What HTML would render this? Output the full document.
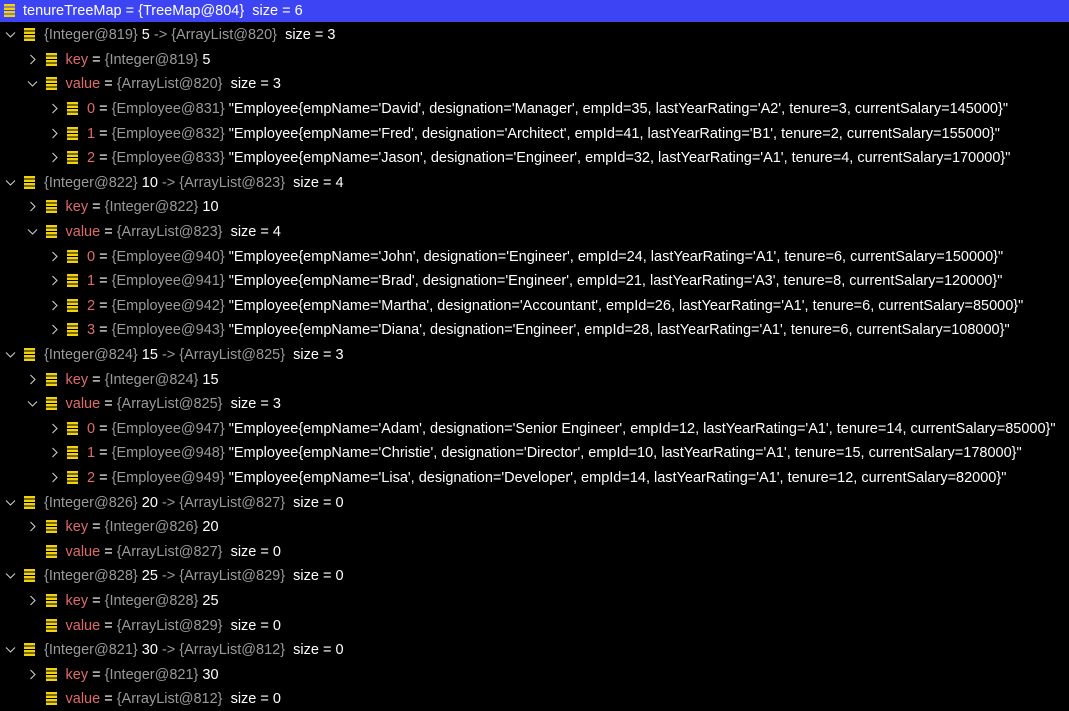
<!DOCTYPE html>
<html><head><meta charset="utf-8"><style>
body{margin:0;width:1069px;height:711px;background:#000;overflow:hidden;font-family:"Liberation Sans",sans-serif;font-size:14.5px;color:#fff}
.r{position:absolute;left:0;width:1069px;height:24px;line-height:24px;white-space:nowrap}
.hd{background:#3d44f4;height:22px;line-height:22px;top:0}
.ic{position:absolute;top:5px;width:11px;height:13px;background:repeating-linear-gradient(#f2d20a 0 2.6px,transparent 2.6px 3.5px)}
.hd .ic{top:4px;left:4px}
.ar{position:absolute;top:0}
.t{position:absolute;top:0}
.g{color:#9a9a9a}.k{color:#e06a6a}
</style></head><body>
<div class="r hd"><span class="ic"></span><span class="t" style="left:23px">tenureTreeMap = {TreeMap@804}&nbsp; size = 6</span></div>
<div id="rows"></div>
<script>
const rows=[
[1,'v','<span class="g">{Integer@819}</span> 5 <span class="g">-&gt; {ArrayList@820}</span>&nbsp; size = 3'],
[2,'>','<span class="k">key</span> = <span class="g">{Integer@819}</span> 5'],
[2,'v','<span class="k">value</span> = <span class="g">{ArrayList@820}</span>&nbsp; size = 3'],
[3,'>','<span class="k">0</span> = <span class="g">{Employee@831}</span> "Employee{empName=\'David\', designation=\'Manager\', empId=35, lastYearRating=\'A2\', tenure=3, currentSalary=145000}"'],
[3,'>','<span class="k">1</span> = <span class="g">{Employee@832}</span> "Employee{empName=\'Fred\', designation=\'Architect\', empId=41, lastYearRating=\'B1\', tenure=2, currentSalary=155000}"'],
[3,'>','<span class="k">2</span> = <span class="g">{Employee@833}</span> "Employee{empName=\'Jason\', designation=\'Engineer\', empId=32, lastYearRating=\'A1\', tenure=4, currentSalary=170000}"'],
[1,'v','<span class="g">{Integer@822}</span> 10 <span class="g">-&gt; {ArrayList@823}</span>&nbsp; size = 4'],
[2,'>','<span class="k">key</span> = <span class="g">{Integer@822}</span> 10'],
[2,'v','<span class="k">value</span> = <span class="g">{ArrayList@823}</span>&nbsp; size = 4'],
[3,'>','<span class="k">0</span> = <span class="g">{Employee@940}</span> "Employee{empName=\'John\', designation=\'Engineer\', empId=24, lastYearRating=\'A1\', tenure=6, currentSalary=150000}"'],
[3,'>','<span class="k">1</span> = <span class="g">{Employee@941}</span> "Employee{empName=\'Brad\', designation=\'Engineer\', empId=21, lastYearRating=\'A3\', tenure=8, currentSalary=120000}"'],
[3,'>','<span class="k">2</span> = <span class="g">{Employee@942}</span> "Employee{empName=\'Martha\', designation=\'Accountant\', empId=26, lastYearRating=\'A1\', tenure=6, currentSalary=85000}"'],
[3,'>','<span class="k">3</span> = <span class="g">{Employee@943}</span> "Employee{empName=\'Diana\', designation=\'Engineer\', empId=28, lastYearRating=\'A1\', tenure=6, currentSalary=108000}"'],
[1,'v','<span class="g">{Integer@824}</span> 15 <span class="g">-&gt; {ArrayList@825}</span>&nbsp; size = 3'],
[2,'>','<span class="k">key</span> = <span class="g">{Integer@824}</span> 15'],
[2,'v','<span class="k">value</span> = <span class="g">{ArrayList@825}</span>&nbsp; size = 3'],
[3,'>','<span class="k">0</span> = <span class="g">{Employee@947}</span> "Employee{empName=\'Adam\', designation=\'Senior Engineer\', empId=12, lastYearRating=\'A1\', tenure=14, currentSalary=85000}"'],
[3,'>','<span class="k">1</span> = <span class="g">{Employee@948}</span> "Employee{empName=\'Christie\', designation=\'Director\', empId=10, lastYearRating=\'A1\', tenure=15, currentSalary=178000}"'],
[3,'>','<span class="k">2</span> = <span class="g">{Employee@949}</span> "Employee{empName=\'Lisa\', designation=\'Developer\', empId=14, lastYearRating=\'A1\', tenure=12, currentSalary=82000}"'],
[1,'v','<span class="g">{Integer@826}</span> 20 <span class="g">-&gt; {ArrayList@827}</span>&nbsp; size = 0'],
[2,'>','<span class="k">key</span> = <span class="g">{Integer@826}</span> 20'],
[2,'','<span class="k">value</span> = <span class="g">{ArrayList@827}</span>&nbsp; size = 0'],
[1,'v','<span class="g">{Integer@828}</span> 25 <span class="g">-&gt; {ArrayList@829}</span>&nbsp; size = 0'],
[2,'>','<span class="k">key</span> = <span class="g">{Integer@828}</span> 25'],
[2,'','<span class="k">value</span> = <span class="g">{ArrayList@829}</span>&nbsp; size = 0'],
[1,'v','<span class="g">{Integer@821}</span> 30 <span class="g">-&gt; {ArrayList@812}</span>&nbsp; size = 0'],
[2,'>','<span class="k">key</span> = <span class="g">{Integer@821}</span> 30'],
[2,'','<span class="k">value</span> = <span class="g">{ArrayList@812}</span>&nbsp; size = 0']
];
let h='';
rows.forEach((r,i)=>{
 const top=(i+1)*24.6-1.5, lv=r[0];
 const ax=5+(lv-1)*22, ix=24+(lv-1)*21.5, tx=44+(lv-1)*21.5;
 let arrow='';
 if(r[1]==='v') arrow=`<svg class="ar" style="left:${ax}px;top:8px" width="11" height="8"><path d="M1 1.5 L5.5 6 L10 1.5" stroke="#ccc" stroke-width="1.1" fill="none"/></svg>`;
 else if(r[1]==='>') arrow=`<svg class="ar" style="left:${ax+2}px;top:6px" width="8" height="12"><path d="M1.5 1 L6 5.5 L1.5 10" stroke="#ccc" stroke-width="1.1" fill="none"/></svg>`;
 h+=`<div class="r" style="top:${top}px">${arrow}<span class="ic" style="left:${ix}px"></span><span class="t" style="left:${tx}px">${r[2]}</span></div>`;
});
document.getElementById('rows').innerHTML=h;
</script>
</body></html>
